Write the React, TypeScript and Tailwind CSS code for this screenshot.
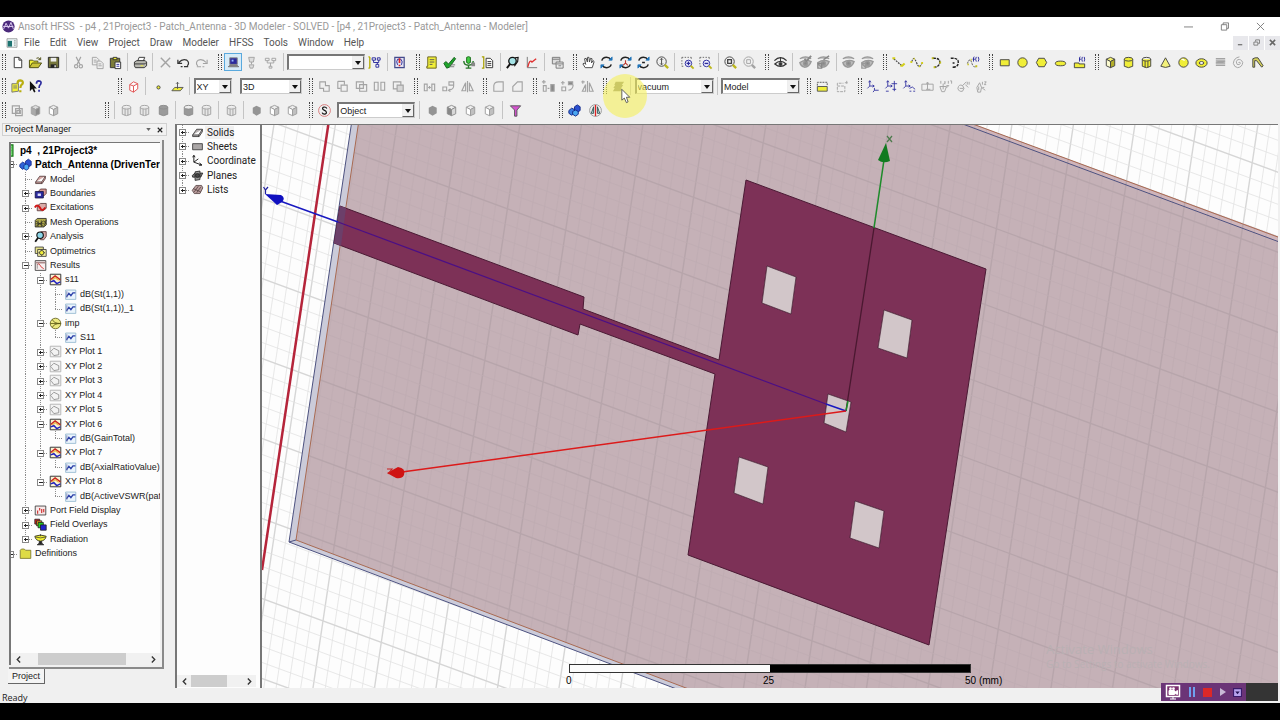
import React from "react";

const G = "#a3a3a3";
const K = "#333";
const Y = "#f0ee38";
const B = "#2a2a9c";

type Pic = React.ReactNode;

const box3d = (top: string, left: string, right: string, line: string): Pic => (
  <g stroke={line} strokeWidth="1" strokeLinejoin="round">
    <path d="M8 2.5 12.5 4.5 8 7 3.5 4.5Z" fill={top} />
    <path d="M3.5 4.5 8 7V13.5L3.5 11.5Z" fill={left} />
    <path d="M12.5 4.5 8 7V13.5L12.5 11.5Z" fill={right} />
  </g>
);
const cylinder = (fill: string, line: string, cols = false): Pic => (
  <g stroke={line} fill={fill}>
    <path d="M3.5 4.5V12Q8 15 12.5 12V4.5" />
    <ellipse cx="8" cy="4.5" rx="4.5" ry="2" fill={cols ? "none" : fill} />
    {cols && <path d="M6.5 6.5V13.5M9.5 6.5V13.5" />}
  </g>
);
const eye = (c: string): Pic => (
  <g fill="none" stroke={c}>
    <path d="M1.500 6Q8 -0.500 14.500 6M2 9.500Q8 4 14 9.500 8 14.500 2 9.500Z" strokeWidth="1.400" />
    <circle cx="8" cy="9.500" r="1.600" fill={c} />
    <path d="M8 2.500V7" />
  </g>
);
const magnifier = (c: string, handle: string, inner: Pic): Pic => (
  <g fill="none" stroke={c}>
    <circle cx="7" cy="7" r="5" />
    <path d="M10.5 10.5 14 14" stroke={handle} strokeWidth="2.5" />
    {inner}
  </g>
);
const rotate = (inner: Pic): Pic => (
  <g fill="none" stroke="#222" strokeWidth="1.6">
    <path d="M3 6Q4 2.5 8 2.5 11 2.5 13 5M13 10Q12 13.5 8 13.5 5 13.5 3 11" />
    <path d="M10.5 5.5H14V2ZM5.500 10.500H2V14Z" fill="#2274b8" stroke="#2274b8" strokeWidth="0.8" />
    {inner}
  </g>
);
const csys = (c: string, tail: Pic): Pic => (
  <g fill="none" stroke={c} strokeWidth="0.9">
    <path d="M4 2V7.500H8.500M4 7.500 1.500 10M2.800 3.500 4 1.800 5.200 3.500M7 6.300 8.800 7.500 7 8.700" />
    {tail}
  </g>
);
const squareOn = (extra: Pic): Pic => (
  <g fill="none" stroke={G} strokeWidth="1.2">{extra}</g>
);
const gridEye = (mark: Pic): Pic => (
  <g fill="none" stroke="#999" strokeWidth="1.5">
    <path d="M2 4Q8 0 14 4M2 8Q8 4 14 7Q12 13 7 13 3 12 2 8Z" fill="#bbb" />
    <circle cx="8" cy="9" r="2" fill="#888" />
    {mark}
  </g>
);

const pics: Record<string, Pic> = {
  new: <path d="M4.500 2.500H9.500L12.500 5.500V13.500H4.500ZM9.500 2.500V5.500H12.500" fill="#fff" stroke={K} />,
  open: <g stroke="#4a4a10" strokeLinejoin="round"><path d="M1.500 13V5.500H5L6 6.500H10.500V8" fill={Y} /><path d="M1.500 13.500 4.500 8.500H14.500L11 13.500Z" fill="#c9c23a" /><path d="M9 3.500Q11 2 13 4.500M13.500 2.500V5H11" fill="none" /></g>,
  save: <g><path d="M2.500 2.500H13.500V13.500H2.500Z" fill="#77773c" stroke="#222" /><path d="M5 3H11V7H5Z" fill="#eee" /><path d="M5 10H11V13.500H5Z" fill="#222" /><path d="M9 11H10.500V13H9Z" fill="#eee" /></g>,
  cut: <g fill="none" stroke={G} strokeWidth="1.200"><path d="M5.500 2 9.500 10M10.500 2 6.500 10" /><circle cx="5.500" cy="12" r="1.800" /><circle cx="10.500" cy="12" r="1.800" /></g>,
  copy: <g fill="#eee" stroke={G}><path d="M2.500 2.500H7L9.500 5V10.500H2.500Z" /><path d="M7.500 6.500H11.500L14 9V14.500H7.500Z" /><path d="M4 5.500H7M4 7.500H7M9 9.500H12M9 11.500H12.500" /></g>,
  paste: <g stroke={K}><path d="M2.500 3.500H12.500V13.500H2.500Z" fill="#7c7c3a" /><path d="M5.500 2.500H9.500V5H5.500Z" fill={Y} /><path d="M7.500 7.500H13.500V14.500H7.500Z" fill="#fff" /><path d="M9 10H12M9 12H12" stroke={B} /></g>,
  print: <g stroke={K}><path d="M5 6.500 6.500 2.500H12.500L11 6.500Z" fill="#fff" /><path d="M1.500 7.500 4 6H13L14.500 7.500V11.500L12 13.500H2.500L1.500 11.500Z" fill="#b8b8b0" /><path d="M2 9.500H12.500L14 8" fill="none" /><path d="M8 11.500H11" stroke={Y} /></g>,
  del: <path d="M3 3 13 13M13 3 3 13" stroke={G} strokeWidth="1.500" />,
  undo: <path d="M3 8Q7 3.500 11.500 5.500 15 8.500 12 11.500M2 5V9H6.500M5 12.500H7M8.500 12.500H13" fill="none" stroke={K} strokeWidth="1.300" />,
  redo: <path d="M13 8Q9 3.500 4.500 5.500 1 8.500 4 11.500M14 5V9H9.500M11 12.500H9M7.500 12.500H3" fill="none" stroke={G} strokeWidth="1.200" />,
  local: <g><path d="M4 3H12V10H4Z" fill={B} stroke="#888" /><path d="M2.500 12.500 4 11H12L13.500 12.500Z" fill="#ccc" stroke="#666" /><path d="M6 5H8V7H6Z" fill="#9bf" /></g>,
  remote: <g fill="#ddd" stroke={G}><path d="M5 2.500H11L10 7.500H6Z" /><path d="M8 7.500V10M5.500 10.500H10.500L9.500 14H6.500Z" /></g>,
  distrib: <path d="M2.500 3.500H6.500V6H2.500ZM9.500 3.500H13.500V6H9.500ZM4.500 6V8.500H11.500V6M8 8.500V12M6.500 12H9.500V14H6.500Z" fill="none" stroke={G} />,
  tree: <g fill="none" stroke={B}><path d="M3 2H1.500M3 2V14M3 14H1.500" stroke="#b5ad00" strokeWidth="1.400" /><path d="M5.500 3H9V5.500H5.500ZM11 3H14V5.500H11ZM9.500 10H12.500V13H9.500ZM7 5.500V8H12.500V5.500M11 8V10" /></g>,
  queue: <g fill="none"><path d="M3 2.500H13V13.500H3Z" fill="#e1e2f2" stroke="#444a8c" strokeWidth="1.300" /><path d="M6 10.500Q4 7 6 4.500H9.500Q12 7 10 10.500" stroke={B} /><path d="M8 3.500V8.500M8 10.500V12" stroke="#d22" strokeWidth="1.800" /></g>,
  note: <g><path d="M4 2H13V14H3V12H4Z" fill={Y} stroke="#66601a" /><path d="M6 5H11M6 7.500H11M6 10H9" stroke="#555" /></g>,
  check: <g><path d="M2 9 4 7 7 9.500 13 2.500 14.500 4 8 13 5 14Z" fill="#1fa52b" stroke="#155d1c" /><path d="M9 10.500H14M8 12.500H13" stroke="#777" /></g>,
  runall: <g><path d="M6 2.500Q8 1 10 2.500V8Q8 10 6 8Z" fill="#4c4" stroke="#166b16" /><path d="M3 6.500Q3 11 8 11 13 11 13 6.500M8 11V14M5 14H11" fill="none" stroke="#287528" strokeWidth="1.500" /><path d="M11 8H15V12H11Z" fill="#888" /></g>,
  report: <g fill="none"><path d="M2 2H4V14H2" stroke="#a9a000" strokeWidth="1.300" /><path d="M6.500 3.500H11L13.500 6V13.500H6.500Z" fill="#fff" stroke={K} /><path d="M8 7H12M8 9H12M8 11H12" stroke={K} /></g>,
  analyze: <g fill="none" stroke="#111"><circle cx="8" cy="6.500" r="4" fill="#a5e3e6" strokeWidth="1.400" /><path d="M5.500 9.500 2 14" strokeWidth="2" /><path d="M10.500 3 14 2.500 13.500 7 10 12" strokeWidth="1.200" /></g>,
  curve: <g fill="none"><path d="M3.500 2V13.500H14" stroke="#777" /><path d="M4 13Q6 4 8.500 7.500L13 4" stroke="#e03030" strokeWidth="1.400" /></g>,
  windows: <g fill="#ddd" stroke="#777"><path d="M2.500 2.500H10.500V9.500H2.500Z" /><path d="M6.500 7.500H14V14H6.500Z" fill="#eee" /><path d="M2.500 4.500H10M7 9.500H14M9 11.500H12" /></g>,
  hand: <path d="M4.500 13.500 2 9.500 3.500 8.500 5 10 3.800 4 5.500 3.500 6.800 7.500 7 2.500H8.500L9 7.500 10.200 3.500 11.800 4 11.200 8.500 12.800 6 14 7 12 13.500Z" fill="#fff" stroke="#444" />,
  rot1: rotate(null),
  rot2: rotate(<path d="M8 5.500V9M5.500 11 8 8.500 10.500 11" stroke="#b8382f" strokeWidth="1.200" />),
  rot3: rotate(<path d="M6.500 8H9.500" />),
  zoomv: magnifier("#444", "#bdb71d", <path d="M7 4V10M5.500 5 7 3.500 8.500 5M5.500 9 7 10.500 8.500 9" />),
  zoomin: <g fill="none"><path d="M2 2.500H12M2 2.500V12M12 2.500V5M2 12H5" stroke="#666" strokeDasharray="1.500 1.500" /><circle cx="9" cy="9" r="3.500" fill="#eef" stroke={B} /><path d="M7 9H11M9 7V11" stroke={B} strokeWidth="1.300" /><path d="M11.500 11.500 14.500 14.500" stroke="#bdb71d" strokeWidth="2" /></g>,
  zoomout: <g fill="none"><path d="M2 2.500H12M2 2.500V12M12 2.500V5M2 12H5" stroke="#666" strokeDasharray="1.500 1.500" /><circle cx="9" cy="9" r="3.500" fill="#eef" stroke={B} /><path d="M7 9H11" stroke={B} strokeWidth="1.500" /><path d="M11.500 11.500 14.500 14.500" stroke="#bdb71d" strokeWidth="2" /></g>,
  fit: magnifier("#444", "#bdb71d", <path d="M5 5H9V9H5Z" strokeWidth="1.400" />),
  fitg: magnifier(G, G, <path d="M5 5H9V9H5Z" />),
  eye: eye("#333"),
  eyeOff: gridEye(<path d="M7 4 9 6.500 14 1" stroke="#888" strokeWidth="2" />),
  eyeOff2: gridEye(<path d="M2 9H6V14H2ZM8 5 14 1" stroke="#888" />),
  eyeG: gridEye(null),
  eyeG2: gridEye(<path d="M2 9H6V14H2Z" />),
  line: <g fill="none"><path d="M3 4 11 11" stroke="#444" strokeDasharray="2 1" strokeWidth="1.300" /><path d="M1.500 3.500H4.500M10 11.500H12L14.500 9" stroke="#d3cf1b" strokeWidth="2.200" /></g>,
  spline: <g fill="none"><path d="M3 7Q5 0 8 8 11 16 13.500 9" stroke="#444" strokeWidth="1.200" strokeDasharray="2 1" /><path d="M1.500 7.500H3.500M5 4H6M10.500 12H12M13 8.500H15" stroke="#d3cf1b" strokeWidth="2.200" /></g>,
  arc: <g fill="none"><path d="M5 3.500Q13 3 12.500 8 12 12.500 7 13" stroke="#222" strokeWidth="1.500" strokeDasharray="3 1" /><path d="M4 3.500H6M12 8H14M6 13H8" stroke="#c3bf1b" strokeWidth="2" /></g>,
  arcc: <g fill="none"><path d="M4 3.500Q12.500 3 12 8 12 12.500 7 13" stroke="#222" strokeWidth="1.500" strokeDasharray="3 1" /><path d="M6 8.500H8M6 13H8" stroke="#222" strokeWidth="1.600" /></g>,
  fx: <g fill="none"><path d="M1.500 9Q4 2 6 8 8 14.500 11 12" stroke="#444" strokeDasharray="2 1" /><path d="M1.500 10H3M5 5H6M10 12H12" stroke="#c3bf1b" strokeWidth="2" /><path d="M8 7V3Q8 2 9 2M7 4.500H9.500M11 2Q9.500 4.500 11 7M13 2Q14.500 4.500 13 7" stroke={B} /></g>,
  rect: <path d="M3.500 5H13V11.500H3.500Z" fill={Y} stroke="#444" />,
  circ: <circle cx="8" cy="8" r="5" fill={Y} stroke="#444" />,
  poly: <path d="M5 3.500H11L13.500 8 11 12.500H5L2.500 8Z" fill={Y} stroke="#444" />,
  ell: <ellipse cx="8" cy="9" rx="5.500" ry="2.500" fill={Y} stroke="#444" />,
  fxrect: <g><path d="M2.500 13.500V8.500H7.500V9.500H13.500V13.500Z" fill={Y} stroke="#444" /><path d="M8 7V3Q8 2 9 2M7.500 4.500H9.500M11 2Q10 4.500 11 7M13 2Q14 4.500 13 7" fill="none" stroke={B} /></g>,
  box: box3d("#f6f470", "#fbfad0", "#b3ae2a", "#444"),
  cyl: cylinder(Y, "#444"),
  prism: cylinder(Y, "#444", true),
  cone: <path d="M8 3 13 12Q8 14.500 3 12Z" fill="#f3f17a" stroke="#444" />,
  sphere: <g><circle cx="8" cy="8" r="5" fill={Y} stroke="#444" /><path d="M6 5Q8 4 9 6" stroke="#fff" fill="none" strokeWidth="1.500" /></g>,
  torus: <g stroke="#444"><ellipse cx="8" cy="8.500" rx="6" ry="4.500" fill={Y} /><ellipse cx="8" cy="8.500" rx="2.500" ry="1.500" fill="#fff" /></g>,
  helix: <path d="M3 4H13M3 6.500H13L3 8.500H13M3 11H13" fill="none" stroke={G} strokeWidth="1.600" />,
  spiral: <path d="M8 8Q10 7 10 9 9 11 6.500 10 4.500 7 7 5 11 4 12.500 8 12 13 7 13.500 3.500 13 2.500 9 3 3 9 2" fill="none" stroke={G} />,
  bond: <path d="M3 13V4L5.500 3H8.500L14 11.500 12.500 13 7 6H5V13Z" fill="#d6d25a" stroke="#444" />,
  help: <g><path d="M2 5H9V13L2 14Z" fill={Y} stroke="#777" /><path d="M3.500 7.500H7.500M3.500 9.500H7.500" stroke="#777" /><path d="M8 5Q8 1.500 11 1.500 14.500 2 13.500 5 11 7 11 9.500M11 12V14" fill="none" stroke="#b9ae10" strokeWidth="2.400" /></g>,
  whats: <g><path d="M2 2V13L4.500 10.500 6.500 14.500 8 13.500 6.500 10H9.500Z" fill="#111" /><path d="M9 5Q9 2 11.500 2 15 2.500 13.500 5.500 11.800 7 11.800 9.500M11.800 11.500V13.500" fill="none" stroke={B} strokeWidth="1.800" /></g>,
  redbox: <g fill="#fff" stroke="#e05050"><path d="M4 6 8 3 12.500 5V10.500L8 14 4 12ZM4 6 8 7.500 12.500 5M8 7.500V14" /></g>,
  point: <circle cx="8" cy="9" r="1.700" fill={Y} stroke="#444" />,
  plane: <g><path d="M5 9H14L11 12.500H2Z" fill={Y} stroke="#555" /><path d="M8 10.500V3.500M6.500 5 8 3.500 9.500 5" fill="none" stroke="#555" /></g>,
  unite: squareOn(<path d="M3 3H9V7H13V13H7V10H3Z" />),
  subtract: squareOn(<><path d="M3 2.500H10V6M3 2.500V10H6" /><path d="M6.500 6.500H13V13H6.500Z" /></>),
  intersect: squareOn(<><path d="M2.500 3H10V10H2.500Z" /><path d="M6 6H13.500V13H6Z" /></>),
  split: squareOn(<path d="M2.500 3.500H6.500V12H2.500ZM9.500 3.500H13.500V12H9.500Z" />),
  imprint: squareOn(<><path d="M2.500 3H10.500V10.500H2.500Z" /><path d="M6.500 6.500H13V13H6.500Z" fill="#d7d7d7" /></>),
  move: squareOn(<path d="M2.500 5.500H5.500V12.500H2.500ZM10.500 5.500H13.500V12.500H10.500ZM6.500 9H9.500M8 7.500V10.500" />),
  rotObj: squareOn(<path d="M2 8.500H6V12.500H2ZM8.500 3H13.500V6.500H8.500ZM13.500 6.500Q14 11 8.500 12M10 10.500 8 12 10 13.500" />),
  mirror: squareOn(<path d="M6 4V12.500H2ZM10 4 14 12.500H10ZM8 2V14" />),
  fillet: squareOn(<path d="M3 13V7Q3.500 3 8 3H13V13Z" />),
  chamfer: squareOn(<path d="M3 13V8L8 3H13V13Z" />),
  dupLine: squareOn(<><path d="M2.500 7H5.500V13H2.500ZM7 10H9M3 1V5M1 3H5" /><path d="M10.500 6H14V13H10.500Z" fill="#888" /></>),
  dupRot: squareOn(<><path d="M2 8.500H6V12.500H2ZM3 2V6M1 4H5M14 6Q14 11 9 12" /><path d="M9 3H13.500V6H9Z" fill="#888" /></>),
  dupMir: squareOn(<path d="M6 6V13H2.500ZM10 4 14 13H10ZM8 2V14M3 1.500V5M1.500 3H5" />),
  layers: <path d="M5 3H14L11.500 6.500H13L10.500 10H12L10 13H2L4 9.500H2.500L4.500 6.500H3.500Z" fill="#8c8c74" />,
  region: <g><path d="M2.500 8H13V13H2.500Z" fill={Y} stroke="#555" /><path d="M2.500 7V3.500H13V7" fill="none" stroke="#555" strokeDasharray="2 1" /></g>,
  region2: <path d="M2.500 7.500H10.500V13.500H2.500ZM2.500 7V4.500H9M12.500 2V6M10.500 4H14.500" fill="none" stroke={G} strokeDasharray="3 1" />,
  cs1: csys(B, <path d="M9 9.500V12H13.500M9 12 7.500 14" />),
  cs2: csys(B, <path d="M11 2V13M8 5H14M9 11H13M2 13H5" />),
  cs3: csys(B, <path d="M8 10 11 8.500 14 11M8 13H10M12 13H14" />),
  cs4: <path d="M2 5.500H14V12H2ZM8 11V4M6.500 11H11M6.800 5 8 3.200 9.200 5" fill="none" stroke={G} />,
  cs5: <path d="M2 8H9L7 13.500H4ZM5.500 11V5M3 2V5M6.500 3H8L6.500 5H8M11 2V5M13 2H14.500V5M9 7H11.500L9 9.500" fill="none" stroke={G} />,
  cs6: <path d="M2 10Q3 5 7 7 10 10 7 13 3 14 2 10ZM7 7 11 3M10 6 13 9M12 3V6M14 3V6M4 10H8" fill="none" stroke={G} />,
  cs7: <path d="M3 9 6 4 8 9 7 14H4ZM8 9 12 12M9 3V6M11 3H13L11 6H13M9 9H11M5 8V12" fill="none" stroke={G} />,
  gIntersect: <g fill="none" stroke={G} strokeWidth="1.300"><path d="M2.500 3H10V11H2.500ZM6 6H13V13.500H6ZM7.500 8H11V11H7.500Z" /></g>,
  gBox: box3d("#ddd", "#aaa", "#8c8c8c", G),
  gBoxOpen: box3d("#eee", "#fff", "#c0c0c0", "#9d9d9d"),
  gBoxHalf: box3d("#eee", "#888", "#d8d8d8", "#8d8d8d"),
  gHex: <path d="M4 5 8 3 12.500 5V11L8 13.500 4 11Z" fill="#949494" />,
  gCyl: cylinder("#e6e6e6", G, true),
  gCylSolid: cylinder("#9b9b9b", "#8d8d8d"),
  gCylTop: <g stroke="#8d8d8d"><path d="M3.500 4.500V12Q8 15 12.500 12V4.500" fill="#999" /><ellipse cx="8" cy="4.500" rx="4.500" ry="2" fill="#eee" /></g>,
  sIcon: <g fill="none"><circle cx="8" cy="8" r="6.300" stroke="#d87a7a" /><path d="M10.500 5.800Q9.500 4 7.500 4.300 5 5.200 6.500 7L9.500 8.800Q11 11 8.500 11.800 6 12 5.500 10.300" stroke="#111" strokeWidth="1.300" /></g>,
  funnel: <g stroke="#555"><path d="M2.500 3H13.500L9.500 7.500V14H7V7.500Z" fill="#d452cf" /></g>,
  hfss: <g stroke="#132a8a"><path d="M2 8 5 5.500 8 7V11L5 13 2 11Z" fill="#3a7be0" /><path d="M8 4 11 2 14 4V8L11 10 8 8Z" fill="#2a4fd0" /><path d="M6 9 9 7.500 12 9V12L9 14 6 12Z" fill="#49a6f0" /></g>,
  mirrorRed: <g fill="none"><circle cx="8" cy="8" r="6.300" stroke="#999" /><path d="M8 2V14" stroke="#d22" strokeWidth="1.400" /><path d="M6 4 3.500 11H6ZM10 4 12.500 11H10Z" fill="#c9e3e3" stroke="#355" /></g>,
  proj: <path d="M1 1H11V15H1ZM8 4V12M5 4H9M5 8H9" fill="#7de07d" stroke="#177a17" strokeWidth="1.500" />,
  design: <g stroke="#132a8a"><path d="M1 8 4.500 5 8 7V11L4.500 14 1 11Z" fill="#2e62d8" /><path d="M8 4 11.500 1.500 15 4V9L11.500 11 8 8Z" fill="#2a4fd0" /><path d="M6 9 9 7.500 12 9V13L9 15 6 13Z" fill="#49a6f0" /></g>,
  slab: <path d="M2 11 7 4H14V7L10 13H2ZM2 11H9.500L14 4M9.500 11V13" fill="#d9aba8" stroke="#503838" strokeLinejoin="round" />,
  slabG: <path d="M2 11 7 4H14V7L10 13H2ZM2 11H9.500L14 4M9.500 11V13" fill="#b9b3b3" stroke="#333" strokeLinejoin="round" />,
  bound: <g><path d="M5 6 8 2.500H15V8L12 11Z" fill="#d89a94" stroke="#533" /><path d="M1.500 5.500H11.500V13.500H1.500Z" fill={B} stroke="#114" /><path d="M4.500 8H8.500V11H4.500Z" fill="#dfe0ff" /></g>,
  excit: <g><path d="M4 6 8 3H15V9L11 12H4Z" fill="#d9aba8" stroke="#533" /><path d="M1 8Q4 3 7.500 8.500 10 14 14 8" fill="none" stroke="#d01818" strokeWidth="2.500" /></g>,
  mesh: <g><path d="M1.500 5.500 4 3H15V11L12 13.500H1.500Z" fill="#b5ae4c" stroke="#222" /><path d="M2 6 12 13M2 13 12 6M5 5.500V13.500M9 5.500V13.500M2 9.500H12M12.500 6 15 10M12.500 12 15 5" stroke="#222" strokeWidth="0.800" fill="none" /></g>,
  analysis: <g><path d="M5 5 9 2H15V8L12 12H8Z" fill="#d9aba8" stroke="#533" /><circle cx="7.500" cy="6.500" r="4" fill="#8bd5e8" stroke="#111" strokeWidth="1.400" /><path d="M5 9.500 1.500 14.500" stroke="#111" strokeWidth="2.200" /></g>,
  opti: <g stroke="#333"><path d="M1.500 2.500H11.500V10.500H1.500Z" fill="#e7e38a" /><path d="M4.500 5.500H15V14H4.500Z" fill="#f5f1a0" /><circle cx="9.500" cy="9.500" r="2.700" fill={Y} /><path d="M9.500 5.500V7M9.500 12V13.500M5.500 9.500H7M12 9.500H13.500" /></g>,
  results: <g fill="none"><path d="M1.500 2H14.500V14H1.500Z" fill="#f7eeee" stroke="#333" /><path d="M2 4.500H14" stroke="#a88" strokeWidth="2" /><path d="M4 7Q6 4 8.500 9.500L12 12" stroke="#c22" /><path d="M4 12V6" stroke="#888" /></g>,
  plot: <g fill="none"><path d="M1.500 1.500H14.500V14.500H1.500Z" fill="#faf3d4" stroke="#333" strokeWidth="1.200" /><path d="M2 8 7.500 3.500 14 8.500" stroke="#c82020" strokeWidth="1.800" /><path d="M4 8.500 7.500 5.500 12 9" stroke="#e8b64a" strokeWidth="1.600" /><path d="M2 11 6 9.500 9.500 13 14 11" stroke="#2525c0" strokeWidth="1.800" /></g>,
  plotG: <g fill="none" stroke="#aaa"><path d="M1.500 1.500H14.500V14.500H1.500Z" fill="#f3f3f3" /><path d="M2 8 6 4 12 7V12L6 13 3 9Z" stroke="#888" /></g>,
  trace: <g fill="none"><path d="M2 2.500H14.500V14H2Z" fill="#eaf4fc" stroke="#8fb4cc" /><path d="M3 11 6 6.500 8.500 9.500 11 6 14 6" stroke="#2a3fa8" strokeWidth="1.700" /><path d="M3.500 4V12" stroke="#77a" /></g>,
  smith: <g fill="none" stroke="#5c5a16"><circle cx="8" cy="8" r="6.500" fill="#ece980" /><path d="M1.500 8H14.500M4 3Q6 8 14 8M4 13Q6 8 14 8" /></g>,
  port: <g fill="none"><path d="M1.500 2.500H14.500V13.500H1.500Z" fill="#f7e8e8" stroke="#333" /><path d="M4.500 12V8M7 8V5M9.500 11V6M12 10V6" stroke="#c22" strokeWidth="1.300" /></g>,
  overlays: <g stroke="#222"><path d="M1 1.500H7V7.500H1Z" fill="#d22" /><path d="M3 3.500H9.500V9.500H3Z" fill="#e8a020" /><path d="M5 5.500H11.500V12H5Z" fill="#2c2" /><path d="M8 8.500H15V15H8Z" fill="#22c" /></g>,
  radiation: <g stroke="#222"><path d="M1 4Q8 1 15 4 14 9.500 8 10 2 9.500 1 4Z" fill={Y} /><path d="M6.500 10.500H9.500V12.500L12 14.500H4L6.500 12.500Z" fill="#222" /><path d="M2 5Q8 7 14 5M8 1.500V4" fill="none" strokeWidth="0.800" /></g>,
  folder: <path d="M1.500 4 3 2.500H6.500L8 4H14.500V14H1.500Z" fill="#dedb45" stroke="#77742a" />,
  sheet: <path d="M2 4.500H14V12H2Z" fill="#aaa6a6" stroke="#333" />,
  coord: <path d="M3.500 2V10L13 13.500M3.500 10 9 6M2 4 3.500 1.500 5 4M10.500 11 13.500 13.600 10 14" fill="none" stroke="#222" strokeWidth="1.200" />,
  planes: <g stroke="#222"><path d="M1.500 8 5 5H14.500L12 10H2Z" fill="#777" /><path d="M5 3.500 11 2.500V13L5 14Z" fill="#999" /><circle cx="8" cy="8" r="2.500" fill="#444" /></g>,
  lists: <g stroke="#544"><path d="M1.500 9 6 3H13L14.500 6 11 13H4Z" fill="#b99c9c" /><path d="M4 11 9 4M7 12 12 5M3 7 12 11" fill="none" /></g>,
};

function Icon({ name, small }: { name: string; small?: boolean }) {
  return (
    <svg viewBox="0 0 16 16" className={small ? "size-[13px] shrink-0" : "size-[15px] shrink-0"} aria-hidden="true">
      {pics[name]}
    </svg>
  );
}

function Tool({ name, active }: { name: string; active?: boolean }) {
  return (
    <button
      type="button"
      aria-label={name}
      className={
        active
          ? "flex h-[18px] w-[18px] shrink-0 items-center justify-center border border-[#5aa9dd] bg-[#d6ebf8]"
          : "flex h-[18px] w-[18px] shrink-0 items-center justify-center"
      }
    >
      <Icon name={name} />
    </button>
  );
}

function Pick({ label, value, className }: { label: string; value: string; className: string }) {
  return (
    <div className={"relative h-4 shrink-0 " + className}>
      <select
        aria-label={label}
        defaultValue={value}
        className="block h-4 w-full appearance-none rounded-none border-t-2 border-l-2 border-r border-b border-t-[#777] border-l-[#777] border-r-[#ccc] border-b-[#ccc] bg-white pl-[1px] text-[9px] leading-[12px] text-[#222]"
      >
        <option>{value}</option>
      </select>
      <span className="pointer-events-none absolute top-[2px] right-[1px] flex h-[13px] w-[12px] items-center justify-center border border-t-[#eee] border-l-[#eee] border-r-[#666] border-b-[#666] bg-[#f0f0f0]">
        <svg viewBox="0 0 6 4" className="h-[4px] w-[6px]"><path d="M0 0H6L3 4Z" fill="#111" /></svg>
      </span>
    </div>
  );
}

function Group({ className, items, children }: { className: string; items?: string; children?: React.ReactNode }) {
  return (
    <div className={"flex shrink-0 items-center gap-[2px] pr-[7px] " + className}>
      <span className="h-4 w-1 shrink-0 border-x-[1px] border-dotted border-[#444]" />
      <div className="flex flex-1 items-center justify-between">{items ? <Tools items={items} /> : children}</div>
    </div>
  );
}

function Tools({ items }: { items: string }) {
  return (
    <>
      {items.split(" ").map((n, i) => (n === "|" ? <Sep key={i} /> : <Tool key={i} name={n} active={n === "local"} />))}
    </>
  );
}

function Sep() {
  return (
    <span className="flex w-[6px] shrink-0 justify-center">
      <span className="h-[18px] w-px bg-[#c4c4c4]" />
    </span>
  );
}

type Node = { cells: string; icon: string; label: string; bold?: boolean; lit?: boolean };

const project: Node[] = [
  { cells: "", icon: "proj", label: "p4  , 21Project3*", bold: true },
  { cells: "-", icon: "design", label: "Patch_Antenna (DrivenTerm", bold: true },
  { cells: "|t", icon: "slab", label: "Model" },
  { cells: "|+", icon: "bound", label: "Boundaries" },
  { cells: "|+", icon: "excit", label: "Excitations" },
  { cells: "|t", icon: "mesh", label: "Mesh Operations" },
  { cells: "|+", icon: "analysis", label: "Analysis" },
  { cells: "|t", icon: "opti", label: "Optimetrics" },
  { cells: "|-", icon: "results", label: "Results" },
  { cells: "||-", icon: "plot", label: "s11" },
  { cells: "|||t", icon: "trace", label: "dB(St(1,1))" },
  { cells: "|||l", icon: "trace", label: "dB(St(1,1))_1" },
  { cells: "||-", icon: "smith", label: "imp" },
  { cells: "|||l", icon: "trace", label: "S11" },
  { cells: "||+", icon: "plotG", label: "XY Plot 1" },
  { cells: "||+", icon: "plotG", label: "XY Plot 2" },
  { cells: "||+", icon: "plotG", label: "XY Plot 3" },
  { cells: "||+", icon: "plotG", label: "XY Plot 4" },
  { cells: "||+", icon: "plotG", label: "XY Plot 5" },
  { cells: "||-", icon: "plot", label: "XY Plot 6" },
  { cells: "|||l", icon: "trace", label: "dB(GainTotal)" },
  { cells: "||-", icon: "plot", label: "XY Plot 7" },
  { cells: "|||l", icon: "trace", label: "dB(AxialRatioValue)" },
  { cells: "||m", icon: "plot", label: "XY Plot 8" },
  { cells: "|| l", icon: "trace", label: "dB(ActiveVSWR(pat" },
  { cells: "|+", icon: "port", label: "Port Field Display" },
  { cells: "|+", icon: "overlays", label: "Field Overlays" },
  { cells: "|p", icon: "radiation", label: "Radiation" },
  { cells: "+", icon: "folder", label: "Definitions" },
];

const model: Node[] = [
  { cells: "+", icon: "slabG", label: "Solids", lit: true },
  { cells: "+", icon: "sheet", label: "Sheets" },
  { cells: "+", icon: "coord", label: "Coordinate" },
  { cells: "+", icon: "planes", label: "Planes" },
  { cells: "p", icon: "lists", label: "Lists" },
];

function Cell({ kind }: { kind: string }) {
  const half = "lmp".includes(kind);
  const tee = kind !== "|" && kind !== " ";
  const plus = kind === "+" || kind === "p";
  const knob = plus || kind === "-" || kind === "m";
  return (
    <svg viewBox="0 0 15 15" preserveAspectRatio="xMidYMid slice" className="h-full w-[15px] shrink-0" shapeRendering="crispEdges" aria-hidden="true">
      <g stroke="#8c8c8c" strokeDasharray="1 1" fill="none">
        {kind !== " " && <path d={half ? "M7.500 0V8" : "M7.500 0V15"} />}
        {tee && <path d="M7 7.500H15" />}
      </g>
      {knob && (
        <>
          <path d="M4.500 4.500H10.500V10.500H4.500Z" fill="#fff" stroke="#888" />
          <path d={plus ? "M6 7.500H9.500M7.500 6V9.500" : "M6 7.500H9.500"} stroke="#222" fill="none" />
        </>
      )}
    </svg>
  );
}

function Tree({ rows, className }: { rows: Node[]; className: string }) {
  return (
    <ul className={"grid auto-rows-fr " + className}>
      {rows.map((r, i) => (
        <li key={i} className="flex min-h-0 items-center whitespace-pre">
          {r.cells.split("").map((c, j) => (
            <Cell key={j} kind={c} />
          ))}
          <span className="flex w-[15px] shrink-0 justify-center">
            <Icon name={r.icon} small />
          </span>
          <span className={(r.bold ? "text-[10px] font-bold text-black " : "") + (r.lit ? "bg-[#f0f0f0] " : "") + "pl-[2px] leading-[13px]"}>
            {r.label}
          </span>
        </li>
      ))}
    </ul>
  );
}

function HScroll({ className, thumb }: { className?: string; thumb: string }) {
  return (
    <div className={"flex h-3 shrink-0 items-center bg-[#f1f1f1] " + (className ?? "")}>
      <button type="button" aria-label="Scroll left" className="flex w-[14px] shrink-0 justify-center">
        <svg viewBox="0 0 6 8" className="h-[7px] w-[5px]"><path d="M5 0.500 1.500 4 5 7.500" fill="none" stroke="#333" strokeWidth="1.600" /></svg>
      </button>
      <div className="flex h-full flex-1">
        <span className={"h-full bg-[#cdcdcd] " + thumb} />
      </div>
      <button type="button" aria-label="Scroll right" className="flex w-[14px] shrink-0 justify-center">
        <svg viewBox="0 0 6 8" className="h-[7px] w-[5px]"><path d="M1 0.500 4.500 4 1 7.500" fill="none" stroke="#333" strokeWidth="1.600" /></svg>
      </button>
    </div>
  );
}

const steep = Array.from({ length: 92 }, (_, i) => i - 4);
const shallow = Array.from({ length: 62 }, (_, i) => i - 26);

function GridLines({ minor, major }: { minor: string; major: string }) {
  return (
    <g fill="none">
      {steep.map((i) => {
        const c = 292.5 + i * 12.3;
        return <path key={"s" + i} d={`M${c - 0.149 * 120} 120L${c - 0.149 * 700} 700`} stroke={i % 5 === 0 ? major : minor} strokeWidth={i % 5 === 0 ? 1.4 : 0.8} />;
      })}
      {shallow.map((i) => {
        const c = 22 + i * 16;
        return <path key={"h" + i} d={`M250 ${c + 0.368 * 250}L1290 ${c + 0.368 * 1290}`} stroke={i % 5 === 0 ? major : minor} strokeWidth={i % 5 === 0 ? 1.4 : 0.8} />;
      })}
    </g>
  );
}

const patch = "M746 180 986 269 929 645 688 555 715 374 580 324 578 335 334 243 340 206 584 297 583 309 719 360Z";
const slots =
  "M767 266 796 277 791 314 762 303Z M884 310 912 320 907 358 878 348Z M828 394 851 402 846 432 824 423Z M739 457 768 467 763 504 734 493Z M855 501 884 511 879 548 850 538Z";

function Scene() {
  return (
    <svg viewBox="262 125 1016 563" preserveAspectRatio="xMinYMin slice" className="absolute inset-0 size-full" role="img" aria-label="Patch antenna model">
      <defs>
        <clipPath id="slab"><path d="M359 120H962L1290 242V710H744L296 540Z" /></clipPath>
      </defs>
      <rect x="262" y="125" width="1016" height="563" fill="#fdfdfd" />
      <GridLines minor="#e2e2e2" major="#d6d6d6" />
      <path d="M352 120H962L1290 242V710H732L289 542Z" fill="#cbcbd9" />
      <path d="M359 120H962L1290 241V710H744L296 540Z" fill="#c5b1b7" />
      <path d="M962 120 1290 241V247L952 120Z" fill="#cfb5ba" />
      <g clipPath="url(#slab)"><GridLines minor="#bfacb2" major="#b7a5ab" /></g>
      <g fill="none">
        <path d="M359 120 296 540 744 710M962 120 1290 241.500" stroke="#a86a52" />
        <path d="M352 120 289 542 732 710M289 542 296 540M952 120 1290 246" stroke="#4d5280" />
        <path d="M329 120 262 570" stroke="#b5243a" strokeWidth="2.500" />
      </g>
      <path d={patch + slots} fill="#7d3157" fillRule="evenodd" stroke="#4a1a34" strokeWidth="1" />
      <path d={slots} fill="#d2c6c9" stroke="#5a3347" strokeWidth="0.800" />
      <path d="M340 206 346 208 341 246 334 243Z" fill="#6c3f6a" />
      <path d="M846 411 874 228" stroke="#4a1830" strokeWidth="1.300" />
      <path d="M846 411 848 401M874 228 884 160" stroke="#1d8c2a" strokeWidth="1.500" fill="none" />
      <path d="M886 143 890 161Q883 164 878 160Z" fill="#117a20" />
      <path d="M846 411 826 404M338 222 280 201" stroke="#1818c0" strokeWidth="1.500" fill="none" />
      <path d="M826 404 338 222" stroke="#4b0f86" strokeWidth="1.300" />
      <path d="M265 194 281 195Q286 198 282 202L277 205Z" fill="#1010c0" />
      <path d="M846 411 402 472" stroke="#dc1a1a" strokeWidth="1.500" />
      <path d="M387 473 398 467Q406 468 404 475 402 479 396 478Z" fill="#cf1212" />
      <g fill="none" strokeWidth="1.200">
        <path d="M887 136 892 142M892 136 887 142" stroke="#4c7a4c" />
        <path d="M263.500 187 265.500 190 268 187M265.500 190V194" stroke="#2020a0" />
        <path d="M387 469H392L388 474" stroke="#c22" />
      </g>
    </svg>
  );
}

const menus = ["File", "Edit", "View", "Project", "Draw", "Modeler", "HFSS", "Tools", "Window", "Help"];

export default function App() {
  return (
    <div className="flex min-h-screen flex-col bg-black pt-[17px] pb-[17px] font-['Liberation_Sans',Arial,sans-serif] text-[9px] text-[#222]">
      <div className="relative flex flex-1 flex-col bg-[#f0f0f0]">
        <header className="bg-white font-['Roboto','Open_Sans',sans-serif]">
          <div className="flex h-[18px] items-center pl-[2px]">
            <svg viewBox="0 0 16 16" className="size-[13px]" aria-hidden="true">
              <circle cx="8" cy="8" r="7.500" fill="#4b2a7b" />
              <path d="M2 11 5 4 8 10 11 3 14 11M1.500 8H14" fill="none" stroke="#d9c8ee" strokeWidth="1.200" />
            </svg>
            <h1 className="flex-1 pl-[3px] text-[10px] whitespace-pre text-[#999]">
              {"Ansoft HFSS  - p4 , 21Project3 - Patch_Antenna - 3D Modeler - SOLVED - [p4 , 21Project3 - Patch_Antenna - Modeler]"}
            </h1>
            <div className="flex">
              <button type="button" aria-label="Minimize" className="flex w-9 justify-center"><svg viewBox="0 0 10 10" className="size-[9px]"><path d="M0 5.500H10" stroke="#777" /></svg></button>
              <button type="button" aria-label="Restore" className="flex w-9 justify-center"><svg viewBox="0 0 10 10" className="size-[9px]"><path d="M1.500 3H7.500V9H1.500ZM3.500 3V1H9.500V7H7.500" fill="none" stroke="#777" /></svg></button>
              <button type="button" aria-label="Close" className="flex w-[38px] justify-center pr-[2px]"><svg viewBox="0 0 10 10" className="size-[9px]"><path d="M1 1 9 9M9 1 1 9" stroke="#777" /></svg></button>
            </div>
          </div>
          <div className="flex h-[15px] items-center pl-[6px]">
            <svg viewBox="0 0 16 14" className="h-[10px] w-3" aria-hidden="true"><path d="M1 1H15V13H1Z" fill="#e8f4f4" stroke="#888" /><path d="M2 4H8V12H2Z" fill="#1d7370" /><path d="M11 4H13M11 7H13M11 10H13" stroke="#555" /></svg>
            <nav className="flex flex-1 gap-[10px] pl-[6px] text-[10px] leading-[15px] text-[#555]">
              {menus.map((m) => (
                <button type="button" key={m}>{m}</button>
              ))}
            </nav>
            <div className="flex gap-px text-[#777]">
              <button type="button" aria-label="Minimize document" className="flex h-[14px] w-[15px] items-center justify-center bg-[#e8e8ec]"><svg viewBox="0 0 8 8" className="size-[7px]"><path d="M1 6.500H6" stroke="#777" strokeWidth="1.500" /></svg></button>
              <button type="button" aria-label="Restore document" className="flex h-[14px] w-[15px] items-center justify-center bg-[#e8e8ec]"><svg viewBox="0 0 8 8" className="size-[7px]"><path d="M1 3.500H5.500V7H1ZM3 3V1H7.500V5H6" fill="none" stroke="#777" /></svg></button>
              <button type="button" aria-label="Close document" className="flex h-[14px] w-[15px] items-center justify-center bg-[#e8e8ec]"><svg viewBox="0 0 8 8" className="size-[7px]"><path d="M1 1 7 7M7 1 1 7" stroke="#666" strokeWidth="1.800" /></svg></button>
            </div>
          </div>
        </header>

        <div className="relative flex flex-col pl-[2px]">
          <div className="flex h-6">
            <Group className="w-[216px]" items="new open save | cut copy paste | print | del undo redo" />
            <Group className="w-[198px]">
              <Tools items="local remote distrib |" />
              <Pick label="Variable" value="" className="w-[78px]" />
              <Tools items="tree | queue" />
            </Group>
            <Group className="w-[157px]" items="note check runall report | analyze curve | windows" />
            <Group className="w-[192px]" items="hand rot1 rot2 rot3 zoomv | zoomin zoomout | fit fitg" />
            <Group className="w-[118px]" items="eye | eyeOff eyeOff2 | eyeG eyeG2" />
            <Group className="w-[106px]" items="line spline arc arcc fx" />
            <Group className="w-[106px]" items="rect circ poly ell fxrect" />
            <Group className="w-[178px]" items="box cyl prism cone sphere torus helix spiral bond" />
          </div>
          <div className="flex h-6">
            <div className="flex w-[116px] shrink-0">
              <Group className="w-[49px]" items="help whats" />
            </div>
            <Group className="w-[191px]">
              <Tools items="redbox | point plane |" />
              <Pick label="Drawing plane" value="XY" className="w-[38px]" />
              <span className="w-[7px]" />
              <Pick label="Movement mode" value="3D" className="w-[62px]" />
            </Group>
            <Group className="w-[105px]" items="unite subtract intersect split imprint" />
            <Group className="w-[69px]" items="move rotObj mirror" />
            <Group className="w-[50px]" items="fillet chamfer" />
            <Group className="w-[70px]" items="dupLine dupRot dupMir" />
            <Group className="w-[204px]">
              <Tools items="layers |" />
              <Pick label="Material" value="vacuum" className="w-[79px]" />
              <Sep />
              <Pick label="Model type" value="Model" className="w-[79px]" />
            </Group>
            <Group className="w-[51px]" items="region region2" />
            <Group className="w-[140px]" items="cs1 cs2 cs3 cs4 cs5 cs6 cs7" />
          </div>
          <div className="flex h-6">
            <div className="flex w-[103px] shrink-0">
              <Group className="w-[67px]" items="gIntersect gBox gBoxOpen" />
            </div>
            <Group className="w-[204px]" items="| gCyl gCyl gCylSolid | gCylTop gCyl | gCyl | gHex gBoxOpen gBoxOpen" />
            <Group className="w-[250px]">
              <Tools items="sIcon" />
              <span className="w-[2px]" />
              <Pick label="Selection mode" value="Object" className="w-[78px]" />
              <Tools items="| gHex gBoxHalf gBoxOpen gBoxOpen | funnel" />
              <span className="w-[26px]" />
            </Group>
            <Group className="w-[52px]" items="hfss mirrorRed" />
          </div>
          <div className="pointer-events-none absolute top-[24px] left-[603px] size-[44px] rounded-full bg-[#f5f05a]/60">
            <svg viewBox="0 0 12 18" className="absolute top-[14px] left-[18px] h-[16px] w-[10px]" aria-hidden="true">
              <path d="M1 1V14L4 11.500 6.500 17 8.500 16 6.500 10.500H10.500Z" fill="#fff" stroke="#444" />
            </svg>
          </div>
        </div>

        <main className="flex flex-1">
          <aside className="flex w-[171px] shrink-0 flex-col pl-[2px]">
            <div className="mt-[1px] mr-[4px] flex h-[13px] items-center border border-[#d0d0d0] bg-[#f2f2f2] pl-[2px] font-['Roboto','Open_Sans',sans-serif] text-[9px]">
              <h2 className="flex-1">Project Manager</h2>
              <button type="button" aria-label="Panel menu" className="w-3"><svg viewBox="0 0 6 4" className="mx-auto h-[3px] w-[5px]"><path d="M0 0H6L3 4Z" fill="#666" /></svg></button>
              <button type="button" aria-label="Close panel" className="w-3"><svg viewBox="0 0 8 8" className="mx-auto size-[6px]"><path d="M1 1 7 7M7 1 1 7" stroke="#222" strokeWidth="1.500" /></svg></button>
            </div>
            <div className="mt-[4px] mr-[7px] ml-[7px] flex flex-1 flex-col border-r-2 border-b-2 border-[#8a8a8a]">
              <div className="mt-[2px] mr-[2px] mb-[2px] flex flex-1 flex-col overflow-hidden border-t border-l-2 border-[#777] bg-[#fdfdfd]">
                <div className="w-full flex-1 overflow-hidden">
                  <Tree rows={project} className="-ml-[8px] h-[418px]" />
                </div>
                <HScroll thumb="ml-[13px] w-[88px]" />
              </div>
            </div>
            <div className="flex h-[19px] pl-[6px]">
              <button type="button" className="h-[15px] border-r border-b border-[#666] bg-[#f4f4f4] px-[4px] leading-[14px]">Project</button>
            </div>
          </aside>
          <aside className="mt-[2px] ml-[4px] flex w-[85px] shrink-0 flex-col overflow-hidden border-t border-l-2 border-[#777] bg-[#fdfdfd] font-['Roboto','Open_Sans',sans-serif] text-[10px]">
            <div className="w-[79px] flex-1 overflow-hidden">
              <Tree rows={model} className="-ml-[2px] h-[72px]" />
            </div>
            <HScroll className="mb-[1px] w-[79px]" thumb="w-[36px]" />
          </aside>
          <section className="relative mt-[2px] mr-[2px] flex-1 overflow-hidden border-t border-l-2 border-[#777]">
            <Scene />
            <div className="absolute bottom-[1px] left-[307px] w-[402px] text-[10px] text-black">
              <div className="flex h-[9px] border border-[#333]">
                <span className="w-1/2 bg-[#fbfbfb]" />
                <span className="w-1/2 bg-black" />
              </div>
              <div className="mt-[2px] -mr-[6px] -ml-[3px] flex h-[12px] justify-between leading-[12px] whitespace-nowrap">
                <span className="w-[6px]">0</span>
                <span>25</span>
                <span className="w-[12px]">50 (mm)</span>
              </div>
            </div>
            <div className="absolute right-[56px] bottom-[16px] w-[176px] font-['Open_Sans','Noto_Sans',sans-serif] text-[#b9b0b3]">
              <p className="text-[13px] leading-[16px]">Activate Windows</p>
              <p className="text-[10px] leading-[15px] whitespace-nowrap">Go to Settings to activate Windows.</p>
            </div>
          </section>
        </main>

        <footer className="flex h-[15px] items-center pt-[4px] pl-[2px] font-['Open_Sans','Noto_Sans',sans-serif] text-[9px] leading-[10px]">Ready</footer>
        <div className="absolute right-[2px] bottom-[2px] flex h-[18px] w-[117px] bg-[#343434]">
          <div className="flex w-[85px] items-center justify-around bg-[#6b3477]">
            <button type="button" aria-label="Recorder"><svg viewBox="0 0 16 16" className="size-[16px]"><path d="M1.500 1.500H14.500V12.500H1.500Z" fill="#7a2f6e" stroke="#fff" strokeWidth="1.500" /><path d="M4 6.500H9.500V10.500H4ZM10 8 12.500 6.500V10.500L10 9.500M5 15H11M8 13V15" fill="#fff" stroke="#fff" /><circle cx="5.500" cy="4.700" r="1.400" fill="#fff" /><circle cx="8.500" cy="4.700" r="1.400" fill="#fff" /></svg></button>
            <button type="button" aria-label="Pause"><svg viewBox="0 0 8 10" className="h-[10px] w-[8px]"><path d="M1 0H3V10H1ZM5 0H7V10H5Z" fill="#6fa0ee" /></svg></button>
            <button type="button" aria-label="Stop"><svg viewBox="0 0 8 8" className="size-[9px]"><path d="M0 0H8V8H0Z" fill="#dc2828" /></svg></button>
            <button type="button" aria-label="Play"><svg viewBox="0 0 6 8" className="h-[8px] w-[6px]"><path d="M0 0 6 4 0 8Z" fill="#c9b8d6" /></svg></button>
            <button type="button" aria-label="Options"><svg viewBox="0 0 8 8" className="size-[9px]"><path d="M0.500 0.500H7.500V7.500H0.500Z" fill="#b9a3ee" stroke="#3a1a6a" /><path d="M2 3H6L4 5.500Z" fill="#221050" /></svg></button>
          </div>
        </div>
      </div>
    </div>
  );
}
